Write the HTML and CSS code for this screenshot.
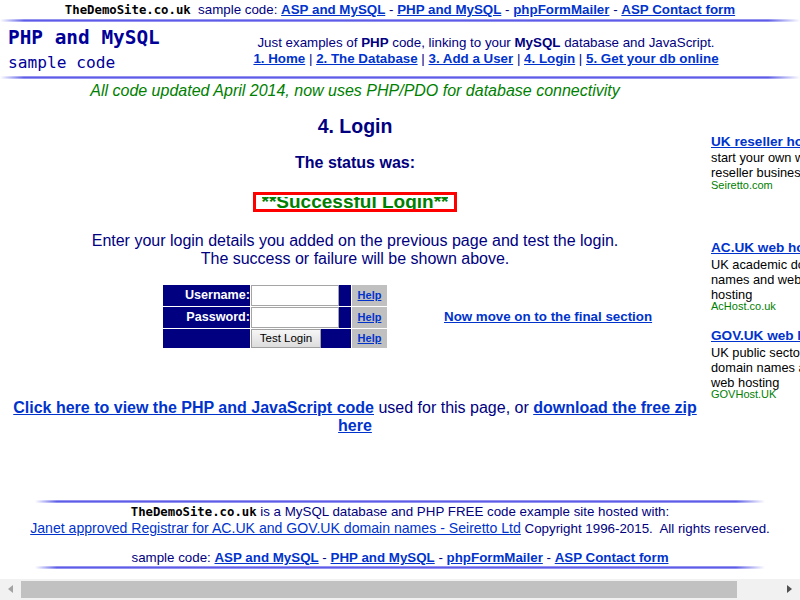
FILE: index.html
```html
<!DOCTYPE html>
<html lang="en">
<head>
<meta charset="utf-8">
<title>PHP and MySQL sample code - 4. Login</title>
<link rel="stylesheet" href="styles.css">
</head>
<body>
<div class="page">
  <div class="topbar"><span class="brand">TheDemoSite.co.uk</span>&nbsp; sample code: <a href="#">ASP and MySQL</a> - <a href="#">PHP and MySQL</a> - <a href="#">phpFormMailer</a> - <a href="#">ASP Contact form</a></div>
  <div class="rule"></div>
  <div class="header">
    <div class="logo">
      <div class="logo-main">PHP and MySQL</div>
      <div class="logo-sub">sample code</div>
    </div>
    <div class="intro">
      <div>Just examples of <b>PHP</b> code, linking to your <b>MySQL</b> database and JavaScript.</div>
      <div class="nav"><a href="#">1. Home</a> | <a href="#">2. The Database</a> | <a href="#">3. Add a User</a> | <a href="#">4. Login</a> | <a href="#">5. Get your db online</a></div>
    </div>
  </div>
  <div class="rule"></div>
  <div class="content">
    <div class="main">
      <p class="update">All code updated April 2014, now uses PHP/PDO for database connectivity</p>
      <h2 class="title">4. Login</h2>
      <h3 class="status-label">The status was:</h3>
      <div class="status-wrap"><div class="status"><div class="status-text">**Successful Login**</div></div></div>
      <p class="instructions">Enter your login details you added on the previous page and test the login.<br>The success or failure will be shown above.</p>
      <div class="form-row">
        <table class="login">
          <tr>
            <td class="lbl">Username:</td>
            <td class="fld"><input class="txt" type="text"></td>
            <td class="help"><a href="#">Help</a></td>
          </tr>
          <tr>
            <td class="lbl">Password:</td>
            <td class="fld"><input class="txt" type="password"></td>
            <td class="help"><a href="#">Help</a></td>
          </tr>
          <tr>
            <td class="lbl"></td>
            <td class="fld"><button class="btn" type="button">Test Login</button></td>
            <td class="help"><a href="#">Help</a></td>
          </tr>
        </table>
        <a class="next" href="#">Now move on to the final section</a>
      </div>
      <p class="code-links"><a href="#">Click here to view the PHP and JavaScript code</a> used for this page, or <a href="#">download the free zip here</a></p>
    </div>
    <div class="ads">
      <div class="ad ad1">
        <a class="ad-title" href="#">UK reseller hosting</a>
        <div class="ad-desc">start your own web<br>reseller business</div>
        <div class="ad-url">Seiretto.com</div>
      </div>
      <div class="ad ad2">
        <a class="ad-title" href="#">AC.UK web hosting</a>
        <div class="ad-desc">UK academic domain<br>names and web<br>hosting</div>
        <div class="ad-url">AcHost.co.uk</div>
      </div>
      <div class="ad ad3">
        <a class="ad-title" href="#">GOV.UK web hosting</a>
        <div class="ad-desc">UK public sector<br>domain names and<br>web hosting</div>
        <div class="ad-url">GOVHost.UK</div>
      </div>
    </div>
  </div>
  <div class="footer">
    <div class="rule footer-rule"></div>
    <div class="foot-line"><span class="brand">TheDemoSite.co.uk</span> is a MySQL database and PHP FREE code example site hosted with:</div>
    <div class="foot-line"><a class="reg-link" href="#">Janet approved Registrar for AC.UK and GOV.UK domain names - Seiretto Ltd</a> Copyright 1996-2015.&nbsp; All rights reserved.</div>
    <div class="foot-line foot-links">sample code: <a href="#">ASP and MySQL</a> - <a href="#">PHP and MySQL</a> - <a href="#">phpFormMailer</a> - <a href="#">ASP Contact form</a></div>
    <div class="rule footer-rule"></div>
  </div>
</div>
<div class="hscroll">
  <span class="arrow arrow-left"></span>
  <span class="thumb"></span>
  <span class="arrow arrow-right"></span>
</div>
</body>
</html>
```

FILE: styles.css
```css
html, body {
  margin: 0;
  padding: 0;
  overflow: hidden;
  background: #ffffff;
}
body {
  font-family: "Liberation Sans", Arial, sans-serif;
  color: #000080;
  font-size: 13.33px;
}
a {
  color: #0033cc;
  text-decoration: underline;
}
.page {
  width: 800px;
}
.brand {
  font-family: "Comic Sans MS", "DejaVu Sans Mono", monospace;
  font-weight: bold;
  color: #000000;
  font-size: 12.3px;
}
.topbar {
  text-align: center;
  font-size: 13.33px;
  line-height: 16px;
  padding-top: 2px;
}
.topbar a, .foot-links a {
  font-weight: bold;
}
.rule {
  height: 3px;
  margin-top: 1px;
  background:
    linear-gradient(to right, #ffffff 0, rgba(255,255,255,0) 3%, rgba(255,255,255,0) 96%, #ffffff 100%),
    linear-gradient(#b0b0f4, #5c5ce8 50%, #b0b0f4);
}
.header {
  display: flex;
  height: 53px;
}
.logo {
  width: 172px;
  flex: none;
  padding-top: 4px;
  padding-left: 8px;
  box-sizing: border-box;
  color: #000099;
  font-family: "Comic Sans MS", "DejaVu Sans Mono", monospace;
}
.logo-main {
  font-size: 19.4px;
  font-weight: bold;
  line-height: 24px;
}
.logo-sub {
  font-size: 16.2px;
  line-height: 26px;
}
.intro {
  flex: 1;
  text-align: center;
  padding-top: 13px;
  font-size: 13.33px;
  line-height: 16px;
}
.nav a {
  font-weight: bold;
}
.content {
  display: flex;
  align-items: flex-start;
}
.main {
  width: 710px;
  flex: none;
  text-align: center;
}
.update {
  margin: 3px 0 0;
  font-size: 16px;
  line-height: 18px;
  font-style: italic;
  color: #008000;
}
.title {
  margin: 15px 0 0;
  font-size: 19.5px;
  line-height: 22px;
  font-weight: bold;
}
.status-label {
  margin: 16.6px 0 0;
  font-size: 16px;
  line-height: 18px;
  font-weight: bold;
}
.status-wrap {
  display: flex;
  justify-content: center;
  margin-top: 20.2px;
}
.status {
  border: 3px solid #ff0000;
  padding: 2px 6px 0;
}
.status-text {
  height: 12px;
  overflow: hidden;
  font-size: 19px;
  line-height: 9px;
  font-weight: bold;
  color: #008000;
  white-space: nowrap;
}
.instructions {
  margin: 20.2px 0 0;
  font-size: 16px;
  line-height: 17.6px;
}
.form-row {
  display: flex;
  align-items: center;
  margin-top: 16.6px;
  padding-left: 162px;
}
.login {
  border-collapse: separate;
  border-spacing: 1px;
}
.login td {
  padding: 0;
}
.lbl {
  width: 87px;
  background: #000080;
  color: #ffffff;
  font-weight: bold;
  font-size: 12.6px;
  text-align: right;
}
.fld {
  width: 100px;
  background: #000080;
  text-align: left;
  line-height: 0;
}
.login tr:nth-child(1) td, .login tr:nth-child(2) td {
  height: 21px;
}
.login tr:nth-child(3) td {
  height: 19px;
}
.help {
  width: 35px;
  background: #c0c0c0;
  text-align: center;
  font-size: 11px;
  font-weight: bold;
}
.txt {
  display: block;
  box-sizing: border-box;
  width: 88px;
  height: 21px;
  margin: 0;
  padding: 0 2px;
  border: 1px solid #a5a5a5;
  background: #ffffff;
  font-family: "Liberation Sans", Arial, sans-serif;
}
.btn {
  display: block;
  box-sizing: border-box;
  width: 70px;
  height: 19px;
  margin: 0;
  padding: 0;
  border: 1px solid #a0a0a0;
  background: linear-gradient(#f6f6f6, #dddddd);
  color: #000000;
  font-family: "Liberation Sans", Arial, sans-serif;
  font-size: 11.5px;
}
.next {
  margin-left: 56px;
  font-size: 13.33px;
  font-weight: bold;
}
.code-links {
  margin: 50.7px 0 0;
  font-size: 16px;
  line-height: 17.5px;
}
.code-links a {
  font-weight: bold;
}
.ads {
  width: 150px;
  flex: none;
  margin-left: 1px;
  padding-top: 54.6px;
  color: #000000;
  text-align: left;
}
.ad {
  display: flex;
  flex-direction: column;
}
.ad2 {
  margin-top: 49.7px;
}
.ad3 {
  margin-top: 16.1px;
}
.ad-title {
  font-size: 13.6px;
  font-weight: bold;
  line-height: 15px;
  white-space: nowrap;
}
.ad-desc {
  margin-top: 1.5px;
  font-size: 12.8px;
  line-height: 15px;
  white-space: nowrap;
}
.ad-url {
  margin-top: -1.5px;
  font-size: 11px;
  line-height: 12px;
  color: #008000;
}
.footer {
  margin-top: 65.8px;
  text-align: center;
}
.footer-rule {
  width: 730px;
  margin: 0 auto;
}
.foot-line {
  font-size: 13.33px;
  line-height: 16.6px;
}
.reg-link {
  font-size: 14.1px;
}
.foot-line:nth-of-type(2) {
  margin-top: 0.5px;
}
.foot-links {
  margin-top: 11.8px;
}
.hscroll {
  position: fixed;
  left: 0;
  right: 0;
  bottom: 0;
  height: 21px;
  background: #f1f1f1;
}
.thumb {
  position: absolute;
  left: 21px;
  top: 2px;
  width: 716px;
  height: 17px;
  background: #c1c1c1;
}
.arrow {
  position: absolute;
  top: 6px;
  width: 0;
  height: 0;
  border-top: 4.5px solid transparent;
  border-bottom: 4.5px solid transparent;
}
.arrow-left {
  left: 8px;
  border-right: 5px solid #a3a3a3;
}
.arrow-right {
  right: 8px;
  border-left: 5px solid #505050;
}
```
